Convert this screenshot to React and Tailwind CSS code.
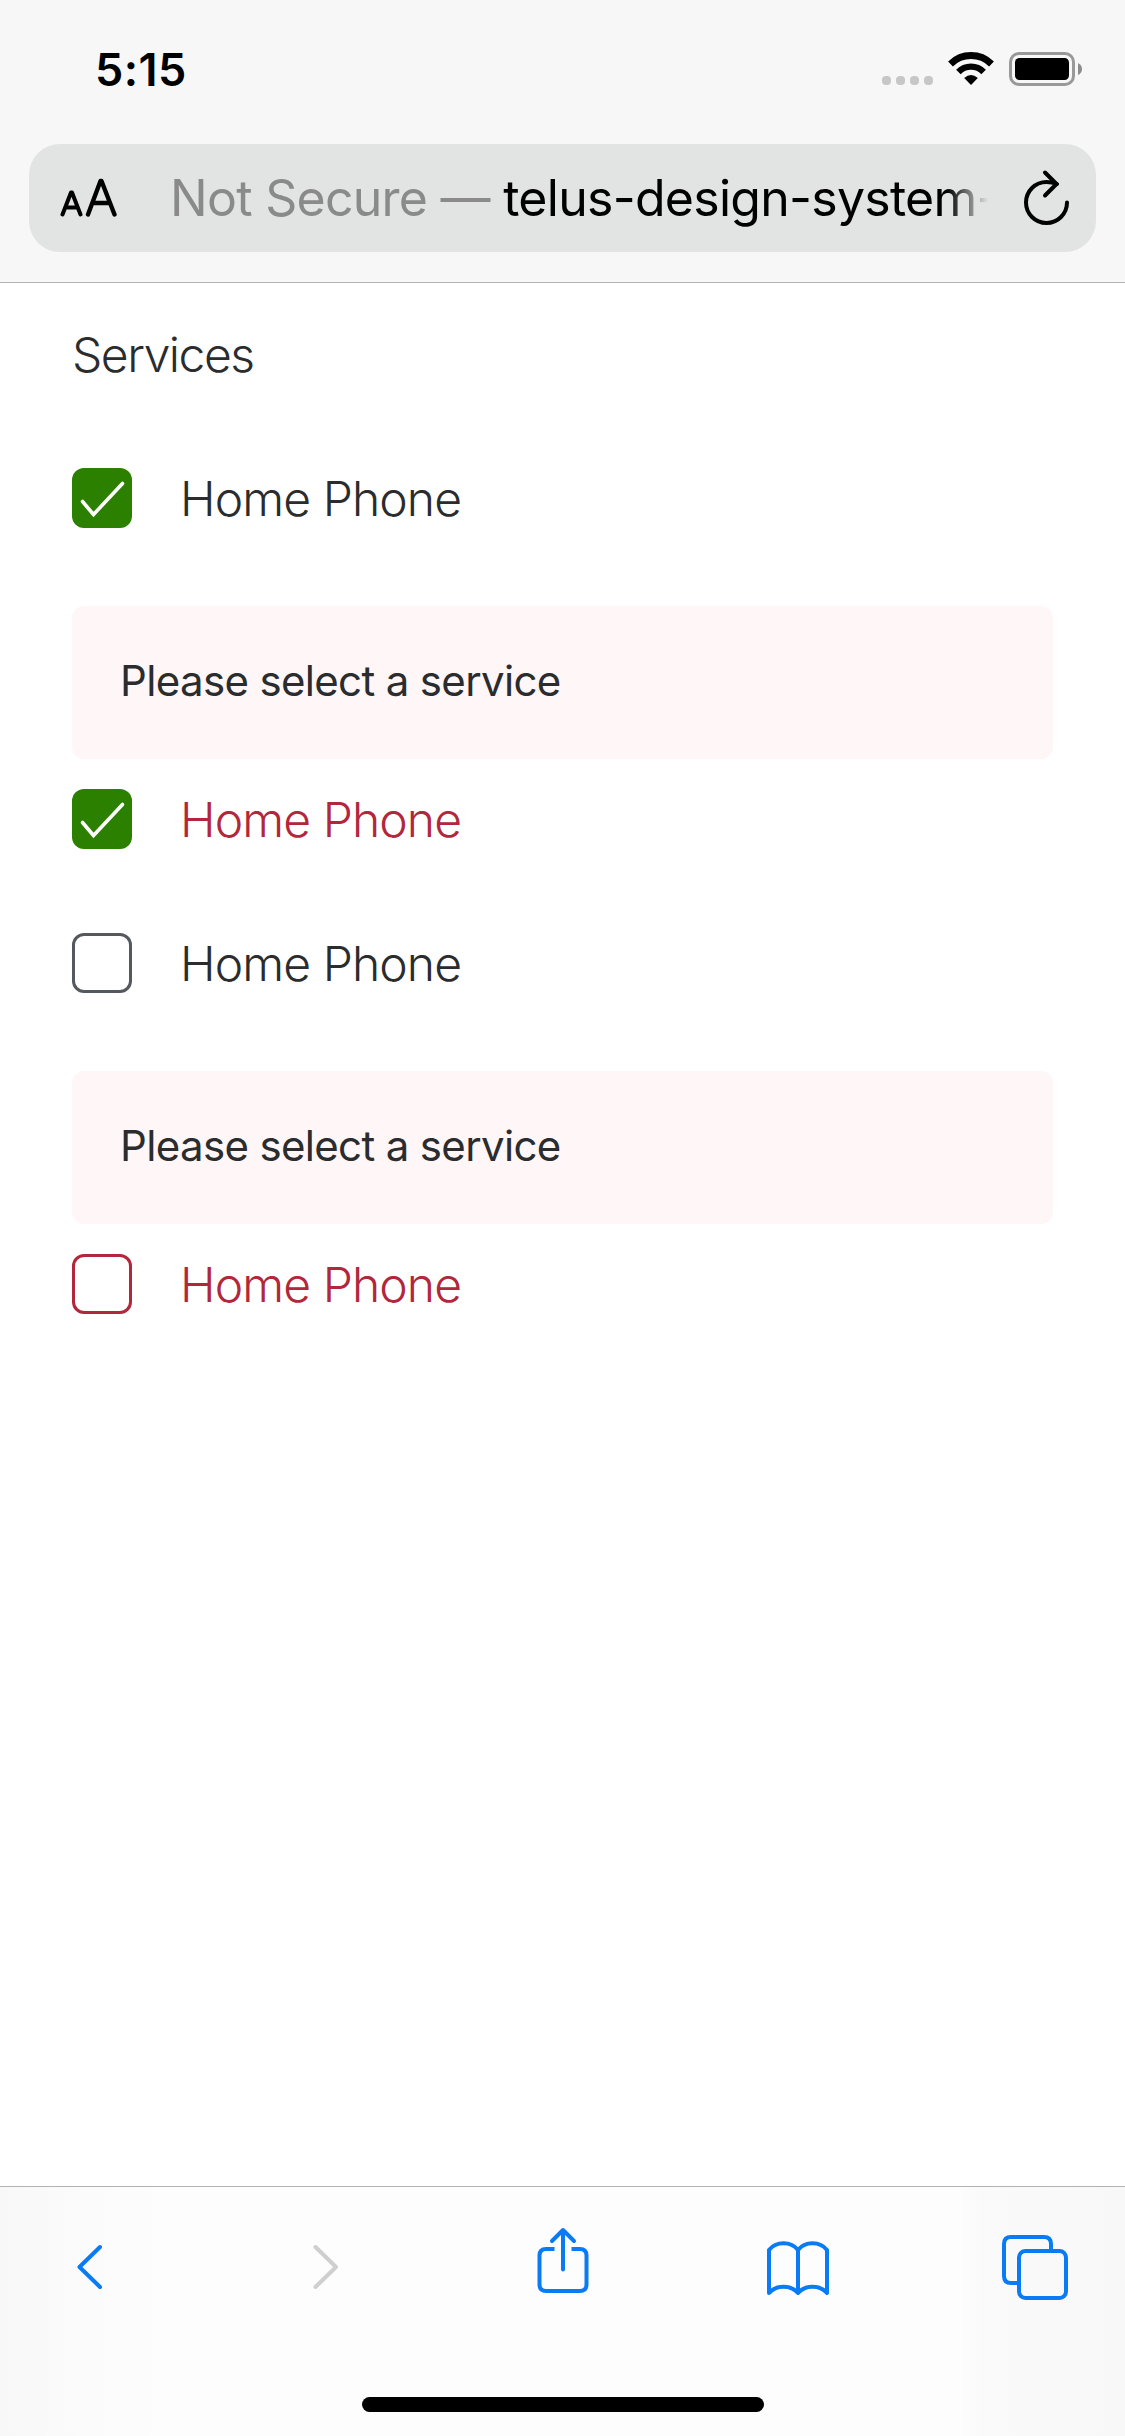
function StatusBar() {
  return (
    <div className="flex h-[144px] items-start justify-between pl-[95px] pr-[43px]">
      <div className="mt-[41px] text-[45px] font-semibold leading-[58px] tracking-[0.4px] text-black">5:15</div>
      <div className="mt-[52px] flex h-[34px] items-start">
        <div className="mt-6 flex gap-[5px]">
          {[0, 1, 2, 3].map((i) => (
            <span key={i} className="size-[9px] rounded-[4px] bg-[#c7c7c7]" />
          ))}
        </div>
        <svg className="ml-[14px]" width="48" height="34" viewBox="0 0 48 34" fill="none" stroke="#000">
          <path d="M3.5 12A29 29 0 0 1 44.5 12" strokeWidth="6.8" />
          <path d="M11.4 19.9A17.8 17.8 0 0 1 36.6 19.9" strokeWidth="6.4" />
          <path d="M24 33L17.2 26Q24 20.2 30.8 26Z" fill="#000" stroke="none" />
        </svg>
        <svg className="ml-[14px]" width="73" height="34" viewBox="0 0 73 34">
          <rect x="1.5" y="1.5" width="63" height="31" rx="8.5" fill="none" stroke="#999" strokeWidth="3" />
          <rect x="6" y="6" width="54" height="22" rx="4.5" fill="#000" />
          <path d="M69 11Q73 13 73 17Q73 21 69 23Z" fill="#8c8c8c" />
        </svg>
      </div>
    </div>
  );
}

function AddressBar() {
  return (
    <div className="mx-[29px] flex h-[108px] items-center rounded-[31px] bg-[#e2e4e3] text-black">
      <svg className="ml-[31px]" width="57" height="40" viewBox="0 0 57 40" fill="none" stroke="#000" strokeLinecap="round" strokeLinejoin="round">
        <path d="M2.500 36.500L11 14.500H12L20.500 36.500M5.500 29.500H17.500" strokeWidth="4" />
        <path d="M28 36.500L40.500 3H41.500L54.500 36.500M32.500 25H50" strokeWidth="4.400" />
      </svg>
      <div className="ml-[53px] w-[850px] whitespace-nowrap text-[50px] leading-[64px] tracking-[-0.73px] [mask-image:linear-gradient(to_right,black_777px,transparent_818px)]">
        <span className="text-[#8a8a8a]">Not Secure — </span>telus-design-system-
      </div>
      <svg className="-ml-px" width="54" height="60" viewBox="0 0 54 60" fill="none" stroke="#000" strokeWidth="4" strokeLinecap="round" strokeLinejoin="round">
        <path d="M48 34.500A20.500 20.500 0 1 1 27.500 14Q33 14 38 16" />
        <path d="M26 4.500L37.500 16L26 27.500" />
      </svg>
    </div>
  );
}

function CheckRow({ checked, error }) {
  return (
    <div className="flex h-[60px] items-center gap-12">
      {checked ? (
        <span className="size-[60px] rounded-xl bg-[#2b8000]">
          <svg width="60" height="60" viewBox="0 0 60 60" fill="none" stroke="#fff" strokeWidth="3.600" strokeLinecap="round">
            <path d="M10.500 33.500L21.500 46.500L50.500 15.500" />
          </svg>
        </span>
      ) : (
        <span className={error ? "size-[60px] rounded-xl border-3 border-[#b2273b]" : "size-[60px] rounded-xl border-3 border-[#54595f]"} />
      )}
      <span className={error ? "pt-px text-[48px] font-light tracking-[-0.9px] text-[#b2273b]" : "pt-px text-[48px] font-light tracking-[-0.9px] text-[#2a2c2e]"}>
        Home Phone
      </span>
    </div>
  );
}

function Notice() {
  return (
    <div className="mb-[30px] flex h-[153px] items-center rounded-xl bg-[#fef6f7] px-12 text-[42px] tracking-[-0.65px] text-[#2a2c2e]">
      <span className="-mt-[5px]">Please select a service</span>
    </div>
  );
}

function Toolbar() {
  return (
    <footer className="h-[250px] border-t border-[#b2b2b2] bg-[linear-gradient(to_right,#f8f8f8_0px,#fbfbfb_90px,#fdfdfd_165px,#fdfdfd_960px,#fafafa_980px,#f8f8f8_1125px)]">
      <div className="flex h-[210px] items-start pl-[75px] pt-[39px] text-[#087bf5]">
        <svg width="30" height="80" viewBox="0 0 30 80" fill="none" stroke="currentColor" strokeWidth="4" strokeLinecap="round" strokeLinejoin="round">
          <path d="M25 21L4.500 41L25 61" />
        </svg>
        <svg className="ml-[206px] text-[#cfcfcf]" width="30" height="80" viewBox="0 0 30 80" fill="none" stroke="currentColor" strokeWidth="4" strokeLinecap="round" strokeLinejoin="round">
          <path d="M4.500 21L25 41L4.500 61" />
        </svg>
        <svg className="ml-[194px]" width="56" height="80" viewBox="0 0 56 80" fill="none" stroke="currentColor" strokeWidth="4" strokeLinejoin="round">
          <path d="M19.500 23H11Q4.500 23 4.500 29.500V58.500Q4.500 65 11 65H45Q51.500 65 51.500 58.500V29.500Q51.500 23 45 23H36.500" />
          <path d="M28 43.500V4M17 15L28 4L39 15" strokeLinecap="round" />
        </svg>
        <svg className="ml-[173px]" width="68" height="80" viewBox="0 0 68 80" fill="none" stroke="currentColor" strokeWidth="4" strokeLinecap="round" strokeLinejoin="round">
          <path d="M34 24C27 15 12 15 5 24V67C12 58.500 27 58.500 34 67C41 58.500 56 58.500 63 67V24C56 15 41 15 34 24V67" />
        </svg>
        <svg className="ml-[167px]" width="70" height="80" viewBox="0 0 70 80" fill="none" stroke="currentColor" strokeWidth="4">
          <path d="M18 57H12Q5 57 5 50V18Q5 11 12 11H45Q52 11 52 18V25" />
          <rect x="20" y="25" width="47" height="47" rx="6.500" />
        </svg>
      </div>
      <div className="mx-auto h-[15px] w-[402px] rounded-full bg-black" />
    </footer>
  );
}

export default function App() {
  return (
    <div className="flex h-[2436px] w-[1125px] flex-col overflow-hidden bg-white font-['Inter',sans-serif]">
      <header className="h-[283px] border-b border-[#b2b2b2] bg-[#f7f7f7]">
        <StatusBar />
        <AddressBar />
      </header>
      <main className="flex flex-1 flex-col px-[72px]">
        <h1 className="mt-[36px] h-[149px] text-[48px] font-light leading-[72px] tracking-[-1.5px] text-[#2a2c2e]">Services</h1>
        <CheckRow checked />
        <div className="mt-[78px]">
          <Notice />
          <CheckRow checked error />
        </div>
        <div className="mt-[84px]">
          <CheckRow />
        </div>
        <div className="mt-[78px]">
          <Notice />
          <CheckRow error />
        </div>
      </main>
      <Toolbar />
    </div>
  );
}
